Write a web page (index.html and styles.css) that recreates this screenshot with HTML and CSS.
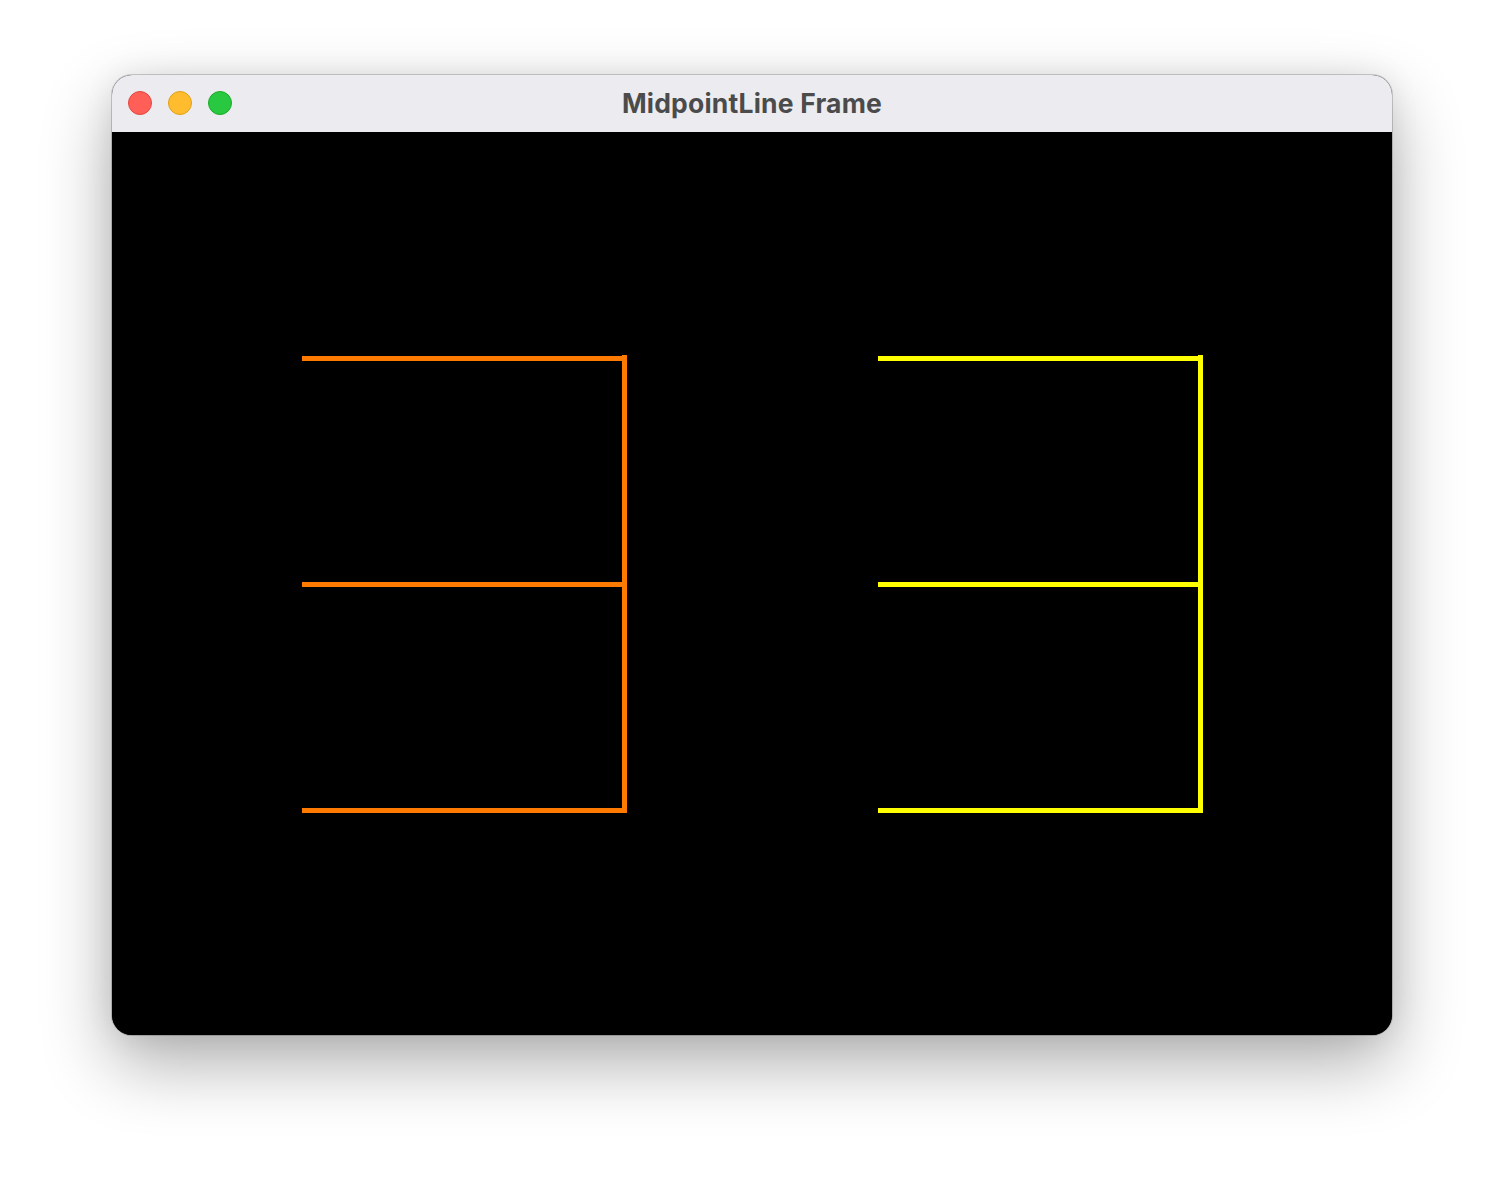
FILE: index.html
```html
<!DOCTYPE html>
<html>
<head>
<meta charset="utf-8">
<link rel="stylesheet" href="styles.css">
</head>
<body>
<div class="window">
  <div class="titlebar">
    <div class="lights">
      <span class="light red"></span>
      <span class="light amber"></span>
      <span class="light green"></span>
    </div>
    <div class="title">MidpointLine Frame</div>
  </div>
  <div class="canvas">
    <svg class="drawing" width="1280" height="903" viewBox="0 0 1280 903">
      <g fill="#ff7a00">
        <rect x="190" y="224" width="325" height="5"/>
        <rect x="190" y="450" width="325" height="5"/>
        <rect x="190" y="676" width="325" height="5"/>
        <rect x="510" y="223" width="5" height="458"/>
      </g>
      <g fill="#ffff00">
        <rect x="766" y="224" width="325" height="5"/>
        <rect x="766" y="450" width="325" height="5"/>
        <rect x="766" y="676" width="325" height="5"/>
        <rect x="1086" y="223" width="5" height="458"/>
      </g>
    </svg>
  </div>
</div>
</body>
</html>
```
FILE: styles.css
```css
html, body {
  margin: 0;
  padding: 0;
  background: #ffffff;
}
body {
  padding: 75px 112px 0 112px;
  width: 1280px;
  height: 1109px;
}
.window {
  width: 1280px;
  height: 960px;
  border-radius: 20px;
  overflow: hidden;
  display: flex;
  flex-direction: column;
  box-shadow: 0 0 0 1px rgba(0,0,0,0.18), 0 28px 70px rgba(0,0,0,0.32), 0 0 30px rgba(0,0,0,0.08);
  background: #000;
}
.titlebar {
  height: 57px;
  flex: 0 0 57px;
  background: #ecebf0;
  position: relative;
  display: flex;
  align-items: center;
  justify-content: center;
  box-sizing: border-box;
}
.lights {
  position: absolute;
  left: 16px;
  top: 16px;
  display: flex;
  gap: 16px;
}
.light {
  width: 24px;
  height: 24px;
  border-radius: 50%;
  box-sizing: border-box;
}
.red { background: #ff5f57; border: 1px solid #e2463f; }
.amber { background: #febc2e; border: 1px solid #e1a116; }
.green { background: #28c840; border: 1px solid #1aab29; }
.title {
  font-family: Inter, "Liberation Sans", sans-serif;
  font-weight: 700;
  font-size: 26.5px;
  letter-spacing: 0.2px;
  color: #4b4b4b;
  margin-top: -2px;
}
.canvas {
  flex: 1;
  background: #000;
  position: relative;
}
.drawing {
  display: block;
}
```
